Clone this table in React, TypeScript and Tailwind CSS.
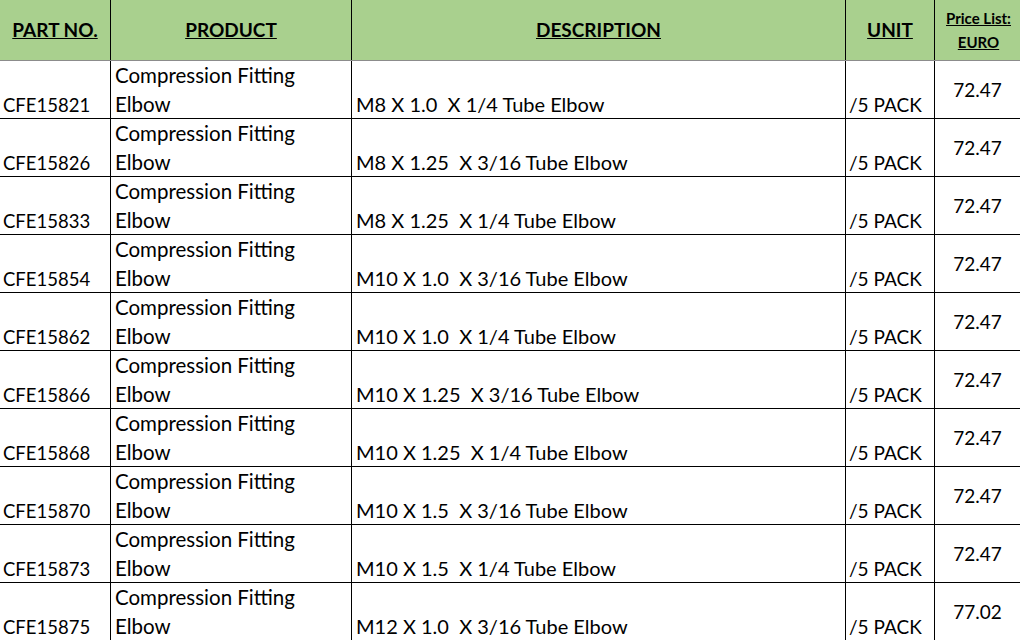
import React from "react";

const rows = [
  ["CFE15821", "M8 X 1.0  X 1/4 Tube Elbow", "72.47"],
  ["CFE15826", "M8 X 1.25  X 3/16 Tube Elbow", "72.47"],
  ["CFE15833", "M8 X 1.25  X 1/4 Tube Elbow", "72.47"],
  ["CFE15854", "M10 X 1.0  X 3/16 Tube Elbow", "72.47"],
  ["CFE15862", "M10 X 1.0  X 1/4 Tube Elbow", "72.47"],
  ["CFE15866", "M10 X 1.25  X 3/16 Tube Elbow", "72.47"],
  ["CFE15868", "M10 X 1.25  X 1/4 Tube Elbow", "72.47"],
  ["CFE15870", "M10 X 1.5  X 3/16 Tube Elbow", "72.47"],
  ["CFE15873", "M10 X 1.5  X 1/4 Tube Elbow", "72.47"],
  ["CFE15875", "M12 X 1.0  X 3/16 Tube Elbow", "77.02"],
];

const cols = "grid grid-cols-[111px_241px_494px_89px_1fr]";

export default function App() {
  return (
    <div
      className="w-[1020px] h-[640px] overflow-hidden bg-white text-black"
      style={{ fontFamily: "Lato, 'Open Sans', sans-serif" }}
    >
      <div className={`${cols} h-[61px] bg-[#a9d08e] border-b border-[#8c8c8c]`}>
        <div className="border-r border-black flex items-center justify-center font-bold underline text-[19px]">PART NO.</div>
        <div className="border-r border-black flex items-center justify-center font-bold underline text-[19px]">PRODUCT</div>
        <div className="border-r border-black flex items-center justify-center font-bold underline text-[19px]">DESCRIPTION</div>
        <div className="border-r border-black flex items-center justify-center font-bold underline text-[19px]">UNIT</div>
        <div className="flex flex-col items-center justify-center font-bold underline text-[15px] leading-[24px] pl-[2px]">
          <span>Price List:</span>
          <span>EURO</span>
        </div>
      </div>
      {rows.map(([part, desc, price]) => (
        <div key={part} className={`${cols} h-[58px] border-b border-black leading-[29px]`}>
          <div className="border-r border-black flex items-end pl-[3px] text-[18.5px]">{part}</div>
          <div className="border-r border-black flex flex-col justify-end pl-[4px] pb-[1px] text-[20.5px]">
            <span>Compression Fitting</span>
            <span>Elbow</span>
          </div>
          <div className="border-r border-black flex items-end pl-[4px] pb-[1px] whitespace-pre text-[20px]">{desc}</div>
          <div className="border-r border-black flex items-end pl-[3px] pb-[1px] text-[19px]">/5 PACK</div>
          <div className="flex items-center justify-center pb-[2px] text-[19px]">{price}</div>
        </div>
      ))}
    </div>
  );
}
